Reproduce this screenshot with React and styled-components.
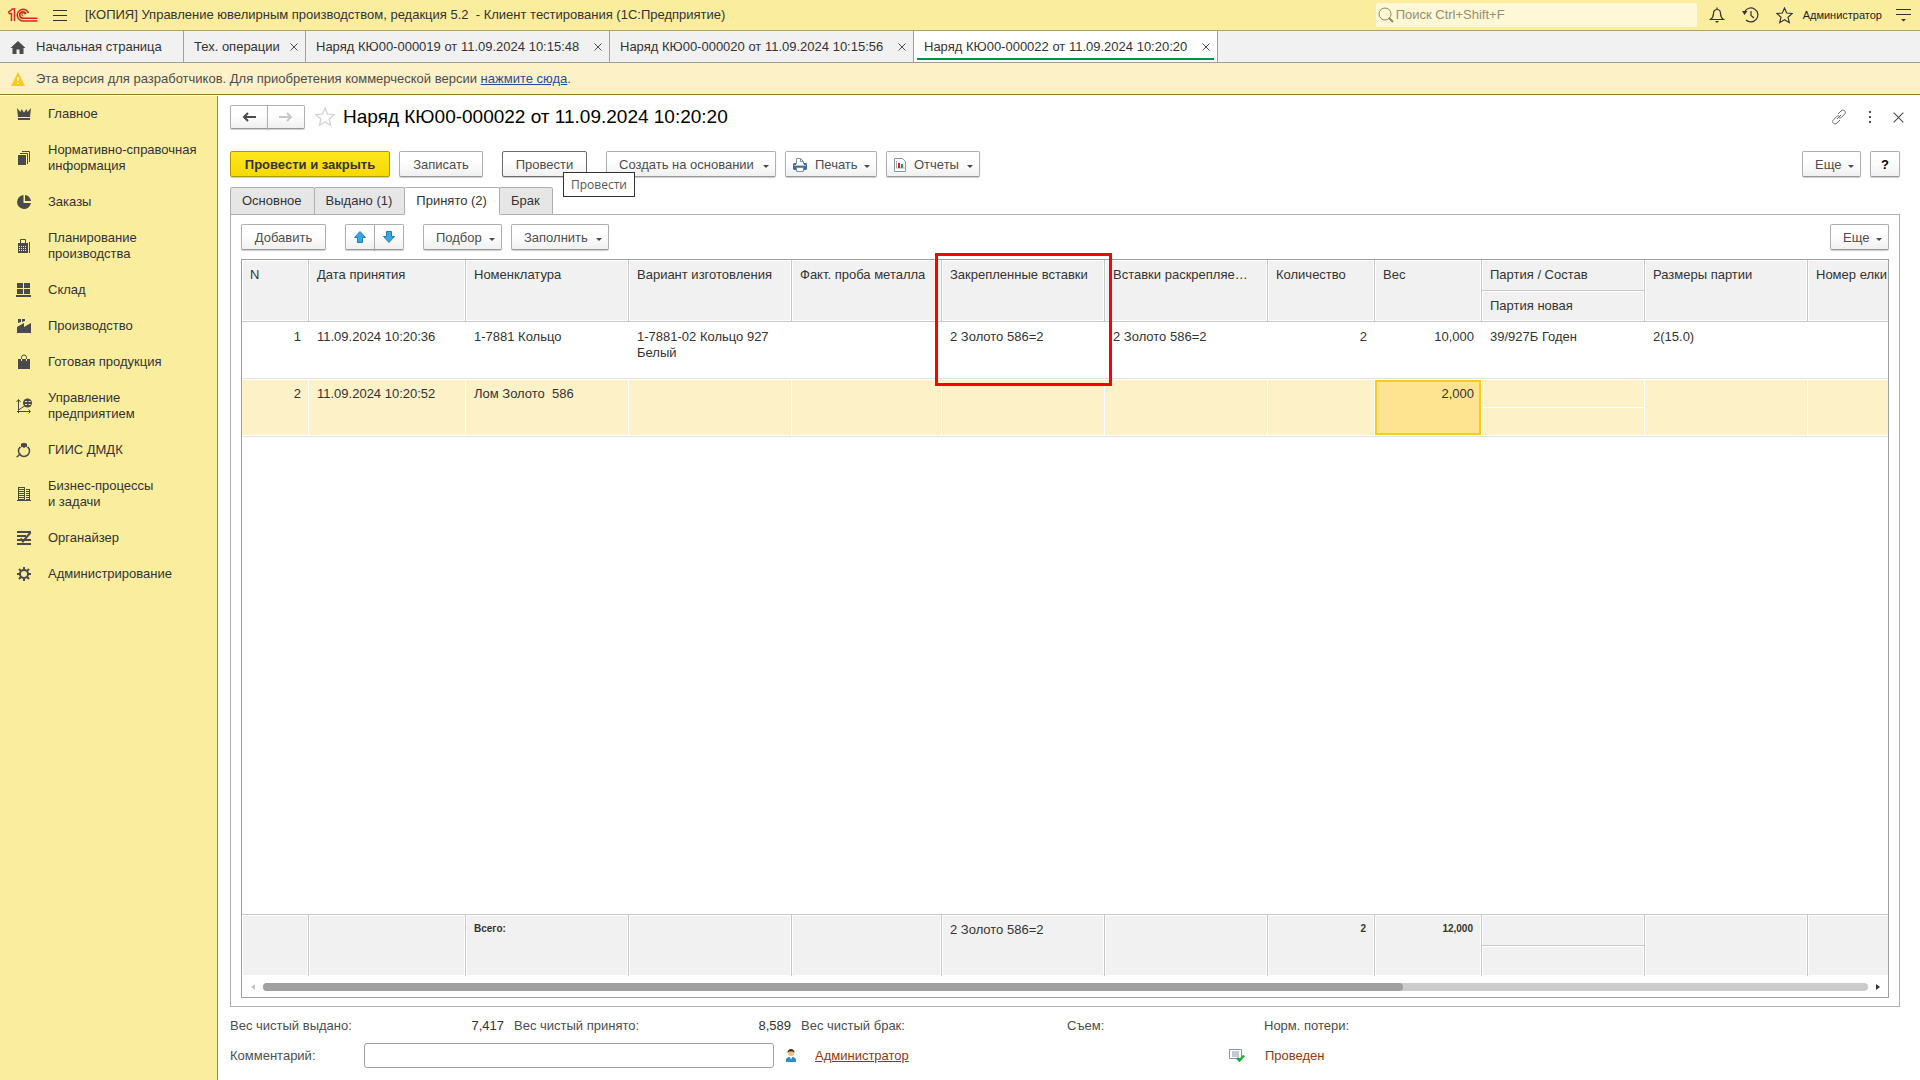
import styled, { createGlobalStyle, css } from "styled-components";

const navItems = [
  { icon: "crown", label: "Главное" },
  { icon: "books", label: "Нормативно-справочная информация" },
  { icon: "pie", label: "Заказы" },
  { icon: "calc", label: "Планирование производства" },
  { icon: "boxes", label: "Склад" },
  { icon: "factory", label: "Производство" },
  { icon: "bag", label: "Готовая продукция" },
  { icon: "chart", label: "Управление предприятием" },
  { icon: "ring", label: "ГИИС ДМДК" },
  { icon: "building", label: "Бизнес-процессы\nи задачи" },
  { icon: "organizer", label: "Органайзер" },
  { icon: "gear", label: "Администрирование" }
];

const windowTabs = [
  { title: "Тех. операции", width: 122 },
  { title: "Наряд КЮ00-000019 от 11.09.2024 10:15:48", width: 304 },
  { title: "Наряд КЮ00-000020 от 11.09.2024 10:15:56", width: 304 },
  {
    title: "Наряд КЮ00-000022 от 11.09.2024 10:20:20",
    width: 304,
    active: true
  }
];

const formTabs = ["Основное", "Выдано (1)", "Принято (2)", "Брак"];

const columns = [
  { key: "n", title: "N", width: 67, right: true },
  { key: "date", title: "Дата принятия", width: 157 },
  { key: "item", title: "Номенклатура", width: 163 },
  { key: "variant", title: "Вариант изготовления", width: 163 },
  { key: "probe", title: "Факт. проба металла", width: 150 },
  { key: "fixed", title: "Закрепленные вставки", width: 163 },
  { key: "loose", title: "Вставки раскрепляе…", width: 163 },
  { key: "qty", title: "Количество", width: 107, right: true },
  { key: "weight", title: "Вес", width: 107, right: true },
  { key: "batch", title: "Партия / Состав", second: "Партия новая", width: 163 },
  { key: "sizes", title: "Размеры партии", width: 163 },
  { key: "tree", title: "Номер елки", width: 163 }
];

const rows = [
  {
    n: "1",
    date: "11.09.2024 10:20:36",
    item: "1-7881 Кольцо",
    variant: "1-7881-02 Кольцо 927 Белый",
    fixed: "2 Золото 586=2",
    loose: "2 Золото 586=2",
    qty: "2",
    weight: "10,000",
    batch: "39/927Б Годен",
    sizes: "2(15.0)"
  },
  {
    n: "2",
    date: "11.09.2024 10:20:52",
    item: "Лом Золото  586",
    weight: "2,000",
    selected: true
  }
];

const totals = {
  item: { text: "Всего:", bold: true },
  fixed: { text: "2 Золото 586=2" },
  qty: { text: "2", bold: true },
  weight: { text: "12,000", bold: true }
};

const navShapes = {
  crown: (
    <path d="M1 2l3.500 4L5.500 3 8 6.500 10.500 3l1 3L15 2l-1 9H2zM2 12h12v2H2z" />
  ),
  books: (
    <>
      <path d="M2 5h8v10H2z" />
      <path d="M4 3.500h7.500V14M6 1.500h7.500V12" fill="none" stroke="#4a4a4a" />
    </>
  ),
  pie: (
    <>
      <path d="M7.500 1A7 7 0 1 0 15 9H7.500z" />
      <path d="M9 1a6.500 6.500 0 0 1 6 6H9z" />
    </>
  ),
  calc: (
    <>
      <path d="M4.500 1.500h5v4h-5z" fill="none" stroke="#4a4a4a" />
      <path d="M2 5h10v10H2zM13 4h1v11h-1z" />
      <path
        d="M3 8.500h8M3 10.500h8M3 12.500h8"
        stroke="#fbed9e"
        strokeDasharray="1 1"
      />
    </>
  ),
  boxes: <path d="M1 1h6v5H1zM8 1h6v5H8zM1 7h6v5H1zM8 7h6v5H8zM0 13h15v2H0z" />,
  factory: <path d="M2 1h3v3L2 5zM6 1h3v2L6 4zM1 9l7-4v4l7-4v10H1z" />,
  bag: (
    <>
      <path d="M2 5h12v10H2z" />
      <path
        d="M5.500 5V3.500a2.500 2.500 0 0 1 5 0V5"
        fill="none"
        stroke="#4a4a4a"
      />
      <path d="M5.500 5v2M10.500 5v2" stroke="#fbed9e" />
    </>
  ),
  chart: (
    <>
      <path
        d="M2.500 2v13M1 13.500h13M.5 4l2-2.500L4.500 4M12.500 11.500l2 2-2 2M2.500 12l6-4"
        fill="none"
        stroke="#4a4a4a"
      />
      <circle cx="11.500" cy="5" r="4.500" />
      <path d="M9 3.500h2M12.500 3.500h2M9 6.500h2M12.500 6.500h2" stroke="#fbed9e" />
    </>
  ),
  ring: (
    <>
      <circle
        cx="8"
        cy="9"
        r="5.500"
        fill="none"
        stroke="#4a4a4a"
        strokeWidth="1.500"
      />
      <path d="M5 2l1.500-1h3L11 2v2L8 6 5 4zM0 15l4-4 1 1-3.500 3.500z" />
      <path d="M3 3l2 2M13 3l-2 2" stroke="#fbed9e" />
    </>
  ),
  building: (
    <>
      <path d="M2 1h7v13H2zM10 3h4v11h-4zM1 14h14v1H1z" />
      <path
        d="M3 2.500h5M3 4.500h5M3 6.500h5M3 8.500h5M3 10.500h5M3 12.500h5M10 4.500h3M10 6.500h3M10 8.500h3M10 10.500h3M10 12.500h3"
        stroke="#fbed9e"
      />
    </>
  ),
  organizer: (
    <>
      <path d="M1 1h14v2H1zM1 5h9v2H1zM1 9h14v2H1zM1 13h14v2H1z" />
      <path
        d="M14.500 2.500L7 11.500 4.500 8.500"
        fill="none"
        stroke="#4a4a4a"
        strokeWidth="2"
      />
    </>
  ),
  gear: (
    <>
      <circle cx="8" cy="8" r="4" fill="none" stroke="#4a4a4a" strokeWidth="2" />
      <path
        d="M8 1v3M8 12v3M1 8h3M12 8h3M3 3l2 2M11 11l2 2M13 3l-2 2M3 13l2-2"
        stroke="#4a4a4a"
        strokeWidth="2"
      />
    </>
  )
};

const NavIcon = ({ name }) => (
  <svg width="16" height="16" viewBox="0 0 16 16" fill="#4a4a4a">
    {navShapes[name]}
  </svg>
);

const Logo = () => (
  <svg width="30" height="14" viewBox="0 0 30 14" fill="none" stroke="#d9251d">
    <path d="M0 4.500L4 1.500M0.500 5.500H3.500V13M3.500 1h3v12" strokeWidth="1.500" />
    <path
      d="M20.500 5A5.800 5.800 0 1 0 15 13h14.500M18 6A3.200 3.200 0 1 0 15 10.200h14.500"
      strokeWidth="1.600"
    />
    <path d="M16.800 6.500a1.500 1.500 0 1 0-1.500 1.500" strokeWidth="1" />
  </svg>
);

const Caret = () => (
  <CaretMark width="6" height="3" viewBox="0 0 6 3" fill="#4a4a4a">
    <path d="M0 0h6L3 3z" />
  </CaretMark>
);

const CloseIcon = ({ size = 8 }) => (
  <svg width={size} height={size} viewBox="0 0 8 8" fill="none">
    <path
      d="M.5.5l7 7M7.500.5l-7 7"
      stroke="#4d4d4d"
      strokeWidth={size > 8 ? 0.8 : 1}
    />
  </svg>
);

const HomeIcon = () => (
  <svg width="16" height="14" viewBox="0 0 16 14" fill="#4a4a4a">
    <path d="M8 1l7.500 7h-2v6h-4V9.500h-3V14h-4V8h-2z" />
  </svg>
);

const WarningIcon = () => (
  <svg width="14" height="14" viewBox="0 0 14 14">
    <path d="M7 0l7 14H0z" fill="#fcc91e" />
    <path d="M7 5v4M7 10.500v1.500" stroke="#fff" strokeWidth="1.500" />
  </svg>
);

const StarIcon = ({ size, color }) => (
  <svg width={size} height={size} viewBox="0 0 18 18" fill="none">
    <path
      d="M9 1l2.300 5.400 5.900.500-4.500 3.900 1.400 5.800L9 13.500l-5.100 3.100 1.400-5.800L.8 6.900l5.900-.500z"
      stroke={color}
      strokeWidth="1.200"
    />
  </svg>
);

const ArrowIcon = ({ back }) => (
  <svg width="16" height="12" viewBox="0 0 16 12" fill="none">
    <path
      d={back ? "M15 6H3M7 2L3 6l4 4" : "M1 6h12M9 2l4 4-4 4"}
      stroke={back ? "#4a4a4a" : "#c8c8c8"}
      strokeWidth="2"
    />
  </svg>
);

const BlueArrow = ({ down }) => (
  <svg width="12" height="12" viewBox="0 0 12 12">
    <path
      d={
        down
          ? "M3.500.5h5v5h3L6 11.500.5 5.500h3z"
          : "M6 .5l5.500 6h-3v5h-5v-5h-3z"
      }
      fill="#35a8ea"
      stroke="#2878a8"
    />
  </svg>
);

const PrinterIcon = () => (
  <svg width="14" height="14" viewBox="0 0 14 14">
    <path d="M3.500 6V.5h4l3 3V6" fill="#fff" stroke="#7c8ea0" />
    <path d="M7.500.5v3h3" fill="none" stroke="#7c8ea0" />
    <path d="M1 5h2v2h8V5h2l1 1v5l-1 1H1l-1-1V6z" fill="#3f6d99" />
    <path d="M1 7.500h12" stroke="#a9c3da" />
    <path d="M3.500 9.500h7v4h-7z" fill="#fff" stroke="#7c8ea0" />
  </svg>
);

const ReportIcon = () => (
  <svg width="12" height="14" viewBox="0 0 12 14">
    <path d="M.5.5h8l3 3v10H.5z" fill="#fff" stroke="#8796a8" />
    <path d="M2.500 3v7h8" stroke="#a5b0bd" fill="none" />
    <path d="M4 5h2v5H4z" fill="#e8202a" />
    <path d="M7 6h2v4H7z" fill="#1ca83c" />
  </svg>
);

const MagnifierIcon = () => (
  <svg width="16" height="16" viewBox="0 0 16 16" fill="none" stroke="#8f895f">
    <circle cx="7" cy="7" r="6" />
    <path d="M11 11l4 4" strokeWidth="2" />
  </svg>
);

const BellIcon = () => (
  <svg width="16" height="16" viewBox="0 0 16 16" fill="none" stroke="#333">
    <path
      d="M1.500 12.500c2-1.500 3-3 3-6C4.500 4 6 2.500 8 2.500S11.500 4 11.500 6.500c0 3 1 4.500 3 6zM8 .500v2"
      strokeWidth="1.200"
    />
    <path d="M6 14h4l-2 2z" fill="#333" stroke="none" />
  </svg>
);

const HistoryIcon = () => (
  <svg width="17" height="16" viewBox="0 0 17 16" fill="none" stroke="#333">
    <path d="M2.500 5A7 7 0 1 1 4 13" strokeWidth="1.200" />
    <path d="M9 4v4.500l3 2.500" strokeWidth="1.200" />
    <path d="M0 4h5.500L2.500 8z" fill="#333" stroke="none" />
  </svg>
);

const ServiceMenuIcon = () => (
  <svg width="15" height="14" viewBox="0 0 15 14">
    <path d="M0 1.500h15M0 6.500h15" stroke="#333" />
    <path d="M5 11h5l-2.500 2.500z" fill="#333" />
  </svg>
);

const BurgerIcon = () => (
  <svg width="14" height="11" viewBox="0 0 14 11">
    <path d="M0 .5h14M0 5.500h14M0 10.500h14" stroke="#333" />
  </svg>
);

const LinkIcon = () => (
  <svg width="16" height="16" viewBox="0 0 16 16" fill="none" stroke="#6b6b6b">
    <path
      d="M7 5l3-3c1.200-1.200 2.600-1.200 3.600-.200s1 2.400-.200 3.600l-3 3c-.8.8-1.900.9-2.700.4M9 11l-3 3c-1.200 1.200-2.600 1.200-3.600.200s-1-2.400.200-3.600l3-3c.8-.8 1.900-.9 2.700-.4M6 10l4-4"
    />
  </svg>
);

const DotsIcon = () => (
  <svg width="4" height="12" viewBox="0 0 4 12" fill="#4d4d4d">
    <path d="M1 0h2v2H1zM1 5h2v2H1zM1 10h2v2H1z" />
  </svg>
);

const PersonIcon = () => (
  <svg width="10" height="13" viewBox="0 0 10 13">
    <path d="M0 13V10l2.500-2h5L10 10v3z" fill="#2e8fc4" />
    <path d="M3.500 7.500h3L5 10.500z" fill="#fff" />
    <circle cx="5" cy="4" r="3" fill="#f3bd78" />
    <path d="M1.500 4C1.500 1 3 0 5 0s3.500 1 3.500 4L7 2.500H3z" fill="#3d3226" />
  </svg>
);

const PostedIcon = () => (
  <svg width="16" height="13" viewBox="0 0 16 13" fill="none">
    <path d="M.5.5h12v9H.5z" fill="#fff" stroke="#8796b0" />
    <path d="M3 3h7M3 5h7M3 7h7" stroke="#8796b0" />
    <path d="M8 9l2.500 2.500L15 6.500" stroke="#1eab3b" strokeWidth="2.500" />
  </svg>
);

const CommandButton = ({ children, caret, icon, width, ...rest }) => (
  <Button
    type="button"
    $caret={caret}
    $icon={Boolean(icon)}
    $width={width}
    {...rest}
  >
    {icon}
    {children}
    {caret && <Caret />}
  </Button>
);

const TitleBar = () => (
  <Header>
    <Logo />
    <IconButton type="button" aria-label="Меню">
      <BurgerIcon />
    </IconButton>
    <AppTitle>
      {
        "[КОПИЯ] Управление ювелирным производством, редакция 5.2  - Клиент тестирования (1С:Предприятие)"
      }
    </AppTitle>
    <SearchBox>
      <MagnifierIcon />
      <SearchInput placeholder="Поиск Ctrl+Shift+F" aria-label="Поиск" />
    </SearchBox>
    <HeaderTools>
      <IconButton type="button" aria-label="Оповещения">
        <BellIcon />
      </IconButton>
      <IconButton type="button" aria-label="История">
        <HistoryIcon />
      </IconButton>
      <IconButton type="button" aria-label="Избранное">
        <StarIcon size={17} color="#333" />
      </IconButton>
    </HeaderTools>
    <UserButton type="button">Администратор</UserButton>
    <IconButton type="button" aria-label="Сервис">
      <ServiceMenuIcon />
    </IconButton>
  </Header>
);

const WindowTabs = () => (
  <TabStrip>
    <HomeTab type="button">
      <HomeIcon />
      Начальная страница
    </HomeTab>
    {windowTabs.map(tab => (
      <WindowTab key={tab.title} $width={tab.width} $active={tab.active}>
        <TabTitle type="button">{tab.title}</TabTitle>
        <IconButton type="button" aria-label="Закрыть">
          <CloseIcon />
        </IconButton>
      </WindowTab>
    ))}
  </TabStrip>
);

const AcceptedTable = () => (
  <Grid>
    <Scroller>
      <Table>
        <colgroup>
          {columns.map(col => (
            <Col key={col.key} $width={col.width} />
          ))}
        </colgroup>
        <thead>
          <tr>
            {columns.map(col => (
              <HeadCell key={col.key} scope="col">
                <HeadStack>
                  <HeadText>{col.title}</HeadText>
                  {col.second && <HeadText $second>{col.second}</HeadText>}
                </HeadStack>
              </HeadCell>
            ))}
          </tr>
        </thead>
        <tbody>
          {rows.map(row => (
            <Row key={row.n} $selected={row.selected}>
              {columns.map(col => (
                <Cell
                  key={col.key}
                  $right={col.right}
                  $selected={row.selected}
                  $split={row.selected && col.second}
                  $current={row.selected && col.key === "weight"}
                >
                  {row[col.key]}
                </Cell>
              ))}
            </Row>
          ))}
          <FillerRow>
            <td colSpan={columns.length} />
          </FillerRow>
        </tbody>
        <tfoot>
          <tr>
            {columns.map(col => (
              <FootCell key={col.key}>
                <HeadStack>
                  <FootText $right={col.right} $bold={totals[col.key]?.bold}>
                    {totals[col.key]?.text}
                  </FootText>
                  {col.second && <FootText $second />}
                </HeadStack>
              </FootCell>
            ))}
          </tr>
        </tfoot>
      </Table>
    </Scroller>
    <ScrollBar>
      <svg width="4" height="6" viewBox="0 0 4 6" fill="#c8c8c8">
        <path d="M4 0v6L0 3z" />
      </svg>
      <Track>
        <Thumb />
      </Track>
      <svg width="4" height="6" viewBox="0 0 4 6" fill="#333">
        <path d="M0 0v6l4-3z" />
      </svg>
    </ScrollBar>
    <Highlight />
  </Grid>
);

const App = () => (
  <Page>
    <GlobalStyle />
    <TitleBar />
    <WindowTabs />
    <Banner>
      <WarningIcon />
      <span>
        Эта версия для разработчиков. Для приобретения коммерческой версии{" "}
        <BannerLink href="#buy">нажмите сюда</BannerLink>.
      </span>
    </Banner>
    <Body>
      <Sidebar>
        {navItems.map(item => (
          <NavLink key={item.icon} href={`#${item.icon}`}>
            <NavIcon name={item.icon} />
            <NavLabel>{item.label}</NavLabel>
          </NavLink>
        ))}
      </Sidebar>
      <Content>
        <FormHeader>
          <ButtonPair>
            <PairButton type="button" aria-label="Назад">
              <ArrowIcon back />
            </PairButton>
            <PairButton type="button" aria-label="Вперед">
              <ArrowIcon />
            </PairButton>
          </ButtonPair>
          <IconButton type="button" aria-label="В избранное">
            <StarIcon size={20} color="#d4d4d4" />
          </IconButton>
          <FormTitle>Наряд КЮ00-000022 от 11.09.2024 10:20:20</FormTitle>
          <FormTools>
            <IconButton type="button" aria-label="Получить ссылку">
              <LinkIcon />
            </IconButton>
            <IconButton type="button" aria-label="Еще действия">
              <DotsIcon />
            </IconButton>
            <IconButton type="button" aria-label="Закрыть форму">
              <CloseIcon size={11} />
            </IconButton>
          </FormTools>
        </FormHeader>

        <Toolbar>
          <Group>
            <PrimaryButton type="button" $width={160}>
              Провести и закрыть
            </PrimaryButton>
            <CommandButton width={84}>Записать</CommandButton>
          </Group>
          <TooltipAnchor>
            <CommandButton width={85} $focused aria-describedby="post-tip">
              Провести
            </CommandButton>
            <Tooltip id="post-tip" role="tooltip">
              Провести
            </Tooltip>
          </TooltipAnchor>
          <Group>
            <CommandButton caret width={170}>
              Создать на основании
            </CommandButton>
            <CommandButton caret width={92} icon={<PrinterIcon />}>
              Печать
            </CommandButton>
            <CommandButton caret width={94} icon={<ReportIcon />}>
              Отчеты
            </CommandButton>
          </Group>
          <RightGroup>
            <CommandButton caret width={59}>
              Еще
            </CommandButton>
            <HelpButton type="button">?</HelpButton>
          </RightGroup>
        </Toolbar>

        <FormTabs role="tablist">
          {formTabs.map((title, i) => (
            <FormTab
              key={title}
              type="button"
              role="tab"
              aria-selected={i === 2}
              $active={i === 2}
            >
              {title}
            </FormTab>
          ))}
        </FormTabs>
        <Panel>
          <Toolbar>
            <CommandButton width={85}>Добавить</CommandButton>
            <ButtonPair>
              <PairButton $narrow type="button" aria-label="Переместить вверх">
                <BlueArrow />
              </PairButton>
              <PairButton $narrow type="button" aria-label="Переместить вниз">
                <BlueArrow down />
              </PairButton>
            </ButtonPair>
            <Group>
              <CommandButton caret width={79}>
                Подбор
              </CommandButton>
              <CommandButton caret width={98}>
                Заполнить
              </CommandButton>
            </Group>
            <RightGroup>
              <CommandButton caret width={59}>
                Еще
              </CommandButton>
            </RightGroup>
          </Toolbar>
          <AcceptedTable />
        </Panel>

        <Summary>
          <SummaryItem $width={274}>
            Вес чистый выдано:<Value>7,417</Value>
          </SummaryItem>
          <SummaryItem $width={277}>
            Вес чистый принято:<Value>8,589</Value>
          </SummaryItem>
          <SummaryItem $width={256}>Вес чистый брак:</SummaryItem>
          <SummaryItem $width={187}>Съем:</SummaryItem>
          <SummaryItem>Норм. потери:</SummaryItem>
        </Summary>
        <CommentRow>
          <CommentLabel htmlFor="comment">Комментарий:</CommentLabel>
          <CommentInput id="comment" />
          <PersonIcon />
          <UserLink href="#user">Администратор</UserLink>
          <PostedIcon />
          <Status>Проведен</Status>
        </CommentRow>
      </Content>
    </Body>
  </Page>
);

const GlobalStyle = createGlobalStyle`
  * {
    box-sizing: border-box;
  }
  body {
    margin: 0;
    background: #fff;
    color: #333;
    font-family: "Liberation Sans", Arial, sans-serif;
    font-size: 13px;
    line-height: 16px;
  }
  button, input {
    font: inherit;
    color: inherit;
  }
  svg {
    display: block;
    flex-shrink: 0;
  }
`;

const Page = styled.div`
  display: flex;
  flex-direction: column;
  min-height: 100vh;
`;

const IconButton = styled.button`
  display: flex;
  align-items: center;
  justify-content: center;
  padding: 0;
  border: 0;
  background: none;
`;

const Header = styled.header`
  display: flex;
  align-items: center;
  height: 31px;
  padding: 0 9px 0 8px;
  background: #fbed9e;
  border-bottom: 1px solid #aba36c;

  & > svg {
    margin-right: 15px;
  }
`;
const AppTitle = styled.h1`
  flex: 1;
  margin: 0 0 0 18px;
  font-size: 13px;
  font-weight: 400;
  white-space: pre;
`;
const SearchBox = styled.label`
  display: flex;
  align-items: center;
  gap: 2px;
  width: 321px;
  height: 24px;
  padding: 0 2px;
  border-radius: 2px;
  background: #fef8d7;
`;
const SearchInput = styled.input`
  flex: 1;
  min-width: 0;
  padding: 0;
  border: 0;
  outline: 0;
  background: none;

  &::placeholder {
    color: #958f73;
    opacity: 1;
  }
`;
const HeaderTools = styled.div`
  display: flex;
  align-items: center;
  gap: 17px;
  margin: 0 10px 0 12px;
`;
const UserButton = styled(IconButton)`
  margin-right: 14px;
  font-size: 11px;
  color: #222;
`;

const TabStrip = styled.nav`
  display: flex;
  height: 32px;
  background: #f1f1f1;
  border-bottom: 1px solid #9c9c9c;
`;
const HomeTab = styled.button`
  display: flex;
  align-items: center;
  gap: 10px;
  width: 184px;
  padding: 0 0 0 10px;
  border: 0;
  border-right: 1px solid #a0a0a0;
  background: none;
  white-space: nowrap;
`;
const WindowTab = styled.div`
  display: flex;
  align-items: center;
  justify-content: space-between;
  gap: 8px;
  min-width: ${({ $width }) => $width}px;
  padding: 0 7px 0 10px;
  border-right: 1px solid #a0a0a0;

  ${({ $active }) =>
    $active &&
    css`
      background: linear-gradient(#009646, #009646) center bottom 2px /
        calc(100% - 6px) 2px no-repeat #fff;
    `}
`;
const TabTitle = styled.button`
  padding: 0;
  border: 0;
  background: none;
  white-space: nowrap;
`;

const Banner = styled.div`
  display: flex;
  align-items: center;
  gap: 11px;
  height: 32px;
  padding-left: 11px;
  margin-bottom: 1px;
  background: #fdf1c7;
  border-bottom: 1px solid #94781a;
  color: #4d4d4d;
`;
const BannerLink = styled.a`
  color: #1f4ea1;
`;

const Body = styled.div`
  display: flex;
  flex: 1;
`;
const Sidebar = styled.nav`
  width: 218px;
  flex-shrink: 0;
  background: #fbed9e;
  border-right: 1px solid #8f8a63;
`;
const NavLink = styled.a`
  display: flex;
  align-items: center;
  gap: 16px;
  padding: 10px 16px;
  color: inherit;
  text-decoration: none;
`;
const NavLabel = styled.span`
  white-space: pre-line;
`;

const Content = styled.main`
  display: flex;
  flex: 1;
  flex-direction: column;
  min-width: 0;
  padding: 9px 20px 12px 12px;
`;

const FormHeader = styled.div`
  display: flex;
  align-items: center;
  height: 24px;
  margin-bottom: 22px;

  & > ${IconButton} {
    margin: 0 8px 0 10px;
  }
`;
const FormTitle = styled.h2`
  margin: 0;
  font-size: 19px;
  line-height: 24px;
  font-weight: 400;
  color: #000;
`;
const FormTools = styled.div`
  display: flex;
  align-items: center;
  gap: 21px;
  margin-left: auto;
  margin-right: -4px;
`;

const buttonFace = css`
  border: 1px solid #b0b0b0;
  border-bottom-color: #989898;
  background: linear-gradient(#fff 40%, #f0f0f0);
  box-shadow: 0 1px 1px rgba(0, 0, 0, 0.2);
  color: #4d4d4d;
`;
const Button = styled.button`
  ${buttonFace}
  display: flex;
  align-items: center;
  justify-content: ${({ $caret }) => ($caret ? "flex-start" : "center")};
  gap: 6px;
  min-width: ${({ $width }) => $width}px;
  height: 26px;
  padding: 1px ${({ $caret }) => ($caret ? 6 : 12)}px 0
    ${({ $icon }) => ($icon ? 7 : 12)}px;
  border-radius: 2px;
  white-space: nowrap;
  ${({ $focused }) => $focused && "border-color: #6b6b6b;"}

  & > svg:not(:last-child) {
    margin-right: 2px;
  }
`;
const CaretMark = styled.svg`
  margin-top: 3px;
  margin-left: auto;
`;
const PrimaryButton = styled(Button)`
  border-color: #b09a00;
  background: linear-gradient(#ffe81f, #f7d800);
  color: #333;
  font-weight: 700;
`;
const HelpButton = styled(Button)`
  width: 30px;
  padding: 1px 0 0;
  color: #000;
  font-weight: 700;
`;
const ButtonPair = styled.div`
  display: flex;
`;
const PairButton = styled.button`
  ${buttonFace}
  display: flex;
  align-items: center;
  justify-content: center;
  width: ${({ $narrow }) => ($narrow ? 30 : 38)}px;
  height: ${({ $narrow }) => ($narrow ? 26 : 24)}px;
  padding: 0;
  border-radius: 2px 0 0 2px;

  & + & {
    margin-left: -1px;
    border-radius: 0 2px 2px 0;
  }
`;

const Toolbar = styled.div`
  display: flex;
  gap: 19px;
`;
const Group = styled.div`
  display: flex;
  gap: 9px;
`;
const RightGroup = styled(Group)`
  margin-left: auto;
`;
const TooltipAnchor = styled.div`
  position: relative;
`;
const Tooltip = styled.div`
  position: absolute;
  z-index: 2;
  top: 21px;
  left: 61px;
  padding: 4px 7px 3px;
  border: 1px solid #333;
  background: #fff;
  color: #575757;
  font-family: "Open Sans", "Noto Sans", sans-serif;
  font-size: 12px;
`;

const FormTabs = styled.div`
  display: flex;
  margin-top: 10px;
`;
const FormTab = styled.button`
  height: 28px;
  padding: 0 12px 0 11px;
  margin-bottom: -1px;
  border: 1px solid #b0b0b0;
  border-radius: 2px 2px 0 0;
  background: #e6e6e6;
  white-space: nowrap;

  & + & {
    margin-left: -1px;
  }
  ${({ $active }) =>
    $active &&
    css`
      z-index: 1;
      background: #fff;
      border-bottom-color: #fff;
    `}
`;
const Panel = styled.section`
  display: flex;
  flex: 1;
  flex-direction: column;
  gap: 9px;
  padding: 9px 10px 8px;
  border: 1px solid #b0b0b0;
`;

const Grid = styled.div`
  position: relative;
  display: flex;
  flex: 1;
  flex-direction: column;
  border: 1px solid #a0a0a0;
`;
const Scroller = styled.div`
  display: flex;
  flex: 1;
  overflow: hidden;
`;
const Table = styled.table`
  width: 100%;
  table-layout: fixed;
  border-spacing: 0;
`;
const Col = styled.col`
  width: ${({ $width }) => $width}px;
`;
const HeadCell = styled.th`
  height: 62px;
  padding: 0;
  border-right: 1px solid #c8c8c8;
  border-bottom: 1px solid #c8c8c8;
  font-weight: 400;
  text-align: left;
  vertical-align: top;
`;
const HeadStack = styled.div`
  display: flex;
  flex-direction: column;
  height: 61px;
`;
const HeadText = styled.div`
  flex: 1;
  padding: 6px 0 0 7px;
  border: 1px solid #fff;
  background: #f1f1f1;
  white-space: nowrap;
  ${({ $second }) => $second && "box-shadow: 0 -1px 0 #c8c8c8;"}
`;
const Row = styled.tr`
  height: ${({ $selected }) => ($selected ? 58 : 57)}px;
`;
const Cell = styled.td`
  padding: 7px 8px 0;
  border-bottom: 1px solid #e2e2e2;
  text-align: ${({ $right }) => ($right ? "right" : "left")};
  vertical-align: top;
  white-space: pre-wrap;

  ${({ $selected }) =>
    $selected &&
    css`
      background: #fdf1c7;
      box-shadow: inset -1px 0 #fff, inset 0 1px #fff, inset 0 -1px #fff;
    `}
  ${({ $split }) =>
    $split &&
    css`
      background: linear-gradient(#fff, #fff) 0 28px / 100% 1px no-repeat
        #fdf1c7;
    `}
  ${({ $current }) =>
    $current &&
    css`
      background: #fee491;
      box-shadow: inset -1px 0 #fff, inset 0 1px #fff, inset 0 -1px #fff,
        inset 2px 0 #fcc91e, inset -3px 0 #fcc91e, inset 0 3px #fcc91e,
        inset 0 -3px #fcc91e;
    `}
`;
const FillerRow = styled.tr`
  & > td {
    padding: 0;
  }
`;
const FootCell = styled.td`
  height: 62px;
  padding: 0;
  border-top: 1px solid #c8c8c8;
  border-right: 1px solid #c8c8c8;
  vertical-align: top;
`;
const FootText = styled(HeadText)`
  padding-right: 7px;
  text-align: ${({ $right }) => ($right ? "right" : "left")};
  ${({ $bold }) =>
    $bold &&
    css`
      font-size: 10px;
      line-height: 14px;
      font-weight: 700;
    `}
`;

const ScrollBar = styled.div`
  display: flex;
  align-items: center;
  gap: 8px;
  height: 21px;
  padding: 0 8px 0 9px;
`;
const Track = styled.div`
  flex: 1;
  height: 8px;
  border-radius: 4px;
  background: #cbcbcb;
`;
const Thumb = styled.div`
  width: 71%;
  height: 8px;
  border-radius: 4px;
  background: #a0a0a0;
`;
const Highlight = styled.div`
  position: absolute;
  top: -7px;
  left: 693px;
  width: 177px;
  height: 133px;
  border: 3px solid #f00;
  pointer-events: none;
`;

const Summary = styled.div`
  display: flex;
  gap: 10px;
  margin-top: 11px;
  color: #4d4d4d;
`;
const SummaryItem = styled.div`
  display: flex;
  justify-content: space-between;
  width: ${({ $width }) => ($width ? `${$width}px` : "auto")};
  white-space: nowrap;
`;
const Value = styled.span`
  color: #333;
`;
const CommentRow = styled.div`
  display: flex;
  align-items: center;
  margin-top: 9px;
  color: #4d4d4d;
`;
const CommentLabel = styled.label`
  width: 134px;
`;
const CommentInput = styled.input`
  width: 410px;
  height: 25px;
  margin-right: 12px;
  padding: 0 6px;
  border: 1px solid #a0a0a0;
  border-radius: 3px;
  outline: 0;
`;
const UserLink = styled.a`
  width: 414px;
  margin-left: 19px;
  color: #8f3a0c;
`;
const Status = styled.span`
  margin-left: 20px;
  color: #8f3a0c;
`;

export default App;
